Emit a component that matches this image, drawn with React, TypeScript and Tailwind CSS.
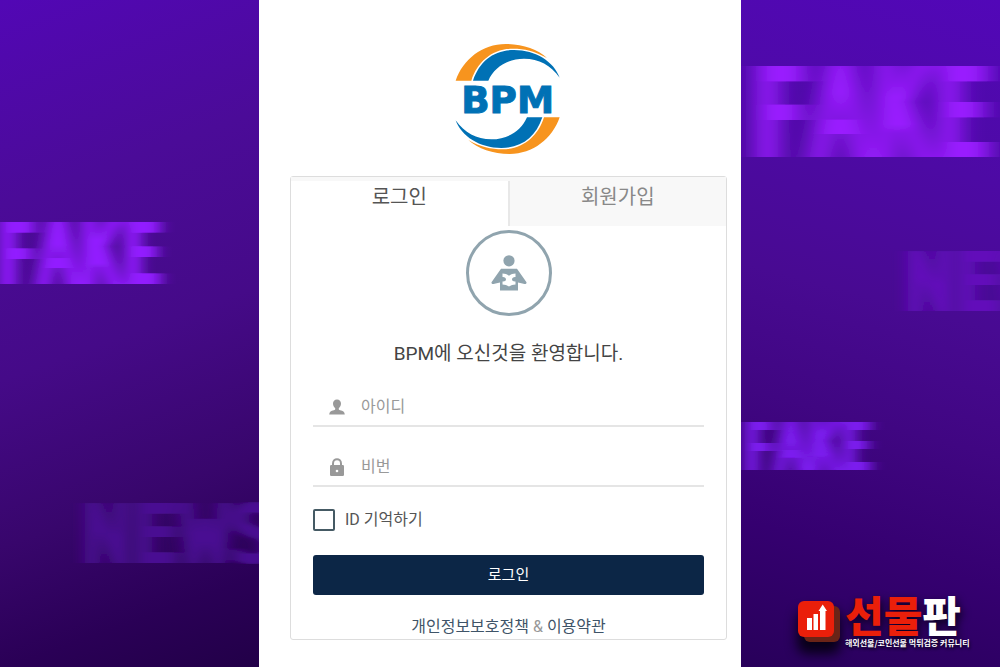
import { useState } from "react";

function MotionBlurDefs() {
  return (
    <svg className="absolute h-0 w-0" aria-hidden="true">
      <defs>
        <filter id="motion" x="-20%" y="0" width="140%" height="100%">
          <feGaussianBlur stdDeviation="7 0" />
        </filter>
        <filter id="motion-wide" x="-20%" y="0" width="140%" height="100%">
          <feGaussianBlur stdDeviation="11 0" />
        </filter>
      </defs>
    </svg>
  );
}

function BrandLogo() {
  return (
    <svg viewBox="0 0 420 420" className="h-[140px] w-[140px]" role="img" aria-label="BPM">
      <g id="swoosh">
        <path fill="#f7941e" d="M50 152C72 88 130 42 200 42C250 42 296 58 324 84C288 63 255 56 222 56C160 56 115 95 97 152Z" />
        <path fill="#0071b5" d="M102 152C122 92 165 60 225 60C290 60 345 95 362 143C335 105 300 86 255 86C205 86 165 112 148 152Z" />
      </g>
      <use href="#swoosh" transform="rotate(180 206 207)" />
      <text x="206" y="248" textAnchor="middle" fontSize="112" fontWeight="700" fill="#0071b5" stroke="#0071b5" strokeWidth="3" className="font-['DejaVu_Sans',sans-serif]">
        BPM
      </text>
    </svg>
  );
}

function ReaderIcon() {
  return (
    <svg viewBox="0 0 36 36" className="h-9 w-9" aria-hidden="true">
      <g fill="#90a4ae">
        <circle cx="18" cy="5.800" r="5.600" />
        <path d="M10 13.800H26L35.500 27.200C35.800 29 34 29.500 32.500 28.800L27 27.500V35.500H9V27.500L3.500 28.800C2 29.500 .2 29 .5 27.200Z" />
      </g>
      <path fill="#fff" d="M11.500 18.500C14 18.500 16 19.300 18 20.800C20 19.300 22 18.500 24.500 18.500V22C22.500 21.800 21 22.800 21 24.300C21 25.800 22.500 26.700 24.500 26.500V29.500C22 29.500 20 30.300 18 31.500C16 30.300 14 29.500 11.500 29.500V26.500C13.500 26.700 15 25.800 15 24.300C15 22.800 13.500 21.800 11.500 22Z" />
    </svg>
  );
}

function PersonIcon() {
  return (
    <svg viewBox="0 0 16 16" className="h-4 w-4" fill="#999" aria-hidden="true">
      <path d="M8 .5C10.500 .5 12 2.200 12 4.600C12 6.800 11 8.300 9.800 9.200C9.600 10.500 10 10.900 11.200 11.300C14 12.100 15.600 12.600 15.800 15.500H.2C.4 12.600 2 12.100 4.800 11.300C6 10.900 6.400 10.500 6.200 9.200C5 8.300 4 6.800 4 4.600C4 2.200 5.500 .5 8 .5Z" />
    </svg>
  );
}

function LockIcon() {
  return (
    <svg viewBox="0 0 16 18" className="h-[18px] w-4" aria-hidden="true">
      <path fill="none" stroke="#999" strokeWidth="2" d="M4 8V5.500C4 -.2 12 -.2 12 5.500V8" />
      <rect x="1" y="7" width="14" height="11" rx="1.200" fill="#999" />
      <circle cx="8" cy="13" r="1.300" fill="#fff" />
    </svg>
  );
}

function CommunityMark() {
  return (
    <div className="absolute right-7 bottom-[18px] flex items-start gap-[11px]">
      <div className="relative mt-[7px] h-9 w-9">
        <div className="absolute top-[5px] left-[6px] h-9 w-9 rounded-md bg-[#6a2417] shadow-[-3px_8px_12px_4px_#080018]" />
        <svg viewBox="0 0 36 36" className="relative h-9 w-9 rounded-md bg-[#ea1f0a]" fill="#fff" aria-hidden="true">
          <path d="M9 17H14V29H9ZM15.500 13H20V29H15.500ZM22 10H20.500L24.700 3.500L29 10H27.500V29H22Z" />
        </svg>
      </div>
      <div className="w-[127px] font-['Noto_Sans_CJK_KR',sans-serif] whitespace-nowrap text-white">
        <p className="mb-[3px] text-[42px] leading-10 font-black [text-shadow:2px_4px_8px_#080018]">
          <span className="text-[#ea1f0a]">선물</span>판
        </p>
        <p className="text-[8px] leading-3 font-bold [text-shadow:1px_2px_3px_#080018]">해외선물/코인선물 먹튀검증 커뮤니티</p>
      </div>
    </div>
  );
}

const wordBase = "absolute font-bold select-none whitespace-nowrap [text-shadow:4px_0_currentColor]";
const fakeWord = "font-['Noto_Sans_Mono_CJK_KR','Noto_Sans_CJK_KR',sans-serif]";
const newsWord = "font-['DejaVu_Sans_Mono',monospace] text-[82px] leading-[60px] [filter:url(#motion)]";

export default function App() {
  const [tab, setTab] = useState("login");
  const tabBase = "flex-1 cursor-pointer pt-[2px] pb-[14px] text-xl leading-[29px]";
  const active = "bg-white text-[#555]";
  const idle = "bg-[#f8f8f8] text-[#888]";

  return (
    <div className="flex min-h-screen bg-[#25004e] font-[Roboto,'Noto_Sans_CJK_KR',sans-serif]">
      <MotionBlurDefs />

      <aside className="relative flex-1 overflow-hidden bg-[linear-gradient(160deg,#5207b5_0%,#4b0b98_27%,#450a88_50%,#38066c_72%,#2a0056_88%,#220048_100%)]">
        <span className={`${wordBase} ${fakeWord} top-[217px] right-[98px] text-[84px] leading-[62px] text-[#921fff] [filter:url(#motion)]`}>FAKE</span>
        <span className={`${wordBase} ${newsWord} top-[505px] left-[80px] text-[#4a0b92]`}>NEWS</span>
      </aside>

      <main className="w-[482px] bg-white pt-[30px] pr-[14px] pb-[26px] pl-[31px]">
        <div className="flex justify-center">
          <BrandLogo />
        </div>

        <div className="mt-[6px] rounded-[3px] border border-[#ddd]">
          <div className="flex border-t-4 border-[#f8f8f8]" role="tablist">
            <button type="button" role="tab" aria-selected={tab === "login"} onClick={() => setTab("login")} className={`${tabBase} ${tab === "login" ? active : idle}`}>
              로그인
            </button>
            <button type="button" role="tab" aria-selected={tab === "join"} onClick={() => setTab("join")} className={`${tabBase} border-l-2 border-[#e8e8e8] ${tab === "join" ? active : idle}`}>
              회원가입
            </button>
          </div>

          <form className="px-[22px]" onSubmit={(e) => e.preventDefault()}>
            <div className="mx-auto mt-1 flex h-[86px] w-[86px] items-center justify-center rounded-full border-[3px] border-[#90a4ae]">
              <ReaderIcon />
            </div>
            <h1 className="mt-6 text-center text-[19px] leading-[27px] font-normal text-[#444]">BPM에 오신것을 환영합니다.</h1>

            <label className="mt-5 flex h-10 items-center gap-4 border-b-2 border-[#e5e5e5] pt-[2px] pl-4">
              <PersonIcon />
              <input type="text" aria-label="아이디" placeholder="아이디" className="min-w-0 flex-1 text-base text-[#555] outline-none placeholder:text-[#999]" />
            </label>
            <label className="mt-5 flex h-10 items-center gap-4 border-b-2 border-[#e5e5e5] pt-[2px] pl-4">
              <LockIcon />
              <input type="password" aria-label="비번" placeholder="비번" className="min-w-0 flex-1 text-base text-[#555] outline-none placeholder:text-[#999]" />
            </label>

            <label className="mt-[22px] flex items-center gap-[10px] text-base leading-[22px] text-[#555]">
              <input type="checkbox" className="h-[22px] w-[22px] appearance-none rounded-[2px] border-2 border-[#455a64] checked:bg-[#455a64]" />
              ID 기억하기
            </label>

            <button type="submit" className="mt-6 block h-10 w-full cursor-pointer rounded-[3px] bg-[#0c2646] text-[15px] text-white">
              로그인
            </button>

            <p className="mt-5 text-center text-base leading-6 text-[#999]">
              <a href="#privacy" className="text-[#3f5468]">개인정보보호정책</a> &amp; <a href="#terms" className="text-[#3f5468]">이용약관</a>
            </p>
          </form>
        </div>
      </main>

      <aside className="relative flex-1 overflow-hidden bg-[linear-gradient(195deg,#5207b8_0%,#4d0aa4_25%,#480a92_45%,#400682_62%,#350070_80%,#28005a_100%)]">
        <span className={`${wordBase} ${fakeWord} top-[58px] left-[6px] text-[122px] leading-[91px] text-[#9a1cff] [filter:url(#motion-wide)]`}>FAKE</span>
        <span className={`${wordBase} ${newsWord} top-[253px] left-[162px] text-[#620fba]`}>NEWS</span>
        <span className={`${wordBase} ${fakeWord} top-[418px] right-[130px] text-[65px] leading-[48px] text-[#7d1af0] [filter:url(#motion)]`}>FAKE</span>
        <CommunityMark />
      </aside>
    </div>
  );
}
